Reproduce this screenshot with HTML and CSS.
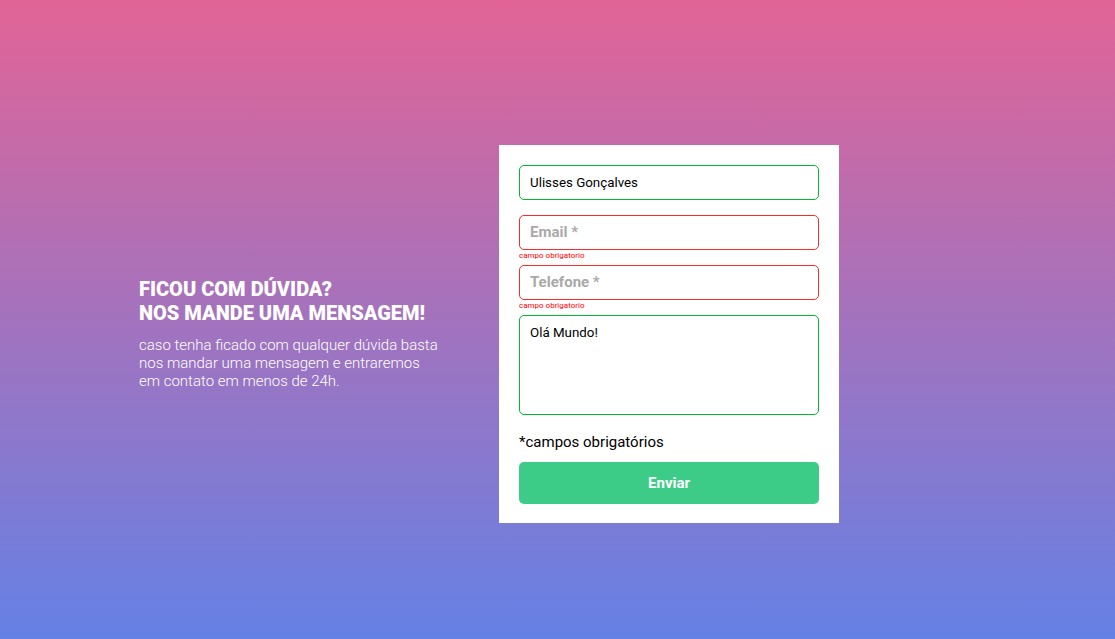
FILE: index.html
```html
<!DOCTYPE html>
<html lang="pt-BR">
<head>
<meta charset="utf-8">
<meta name="viewport" content="width=device-width, initial-scale=1">
<title>Contato</title>
<link rel="stylesheet" href="styles.css">
</head>
<body>
<main class="contact">
  <section class="intro">
    <h1 class="intro-title">Ficou com dúvida?<br>Nos mande uma mensagem!</h1>
    <p class="intro-text">caso tenha ficado com qualquer dúvida basta nos mandar uma mensagem e entraremos em contato em menos de 24h.</p>
  </section>
  <form class="form" novalidate>
    <div class="field">
      <input class="control valid" type="text" aria-label="Nome" value="Ulisses Gonçalves">
    </div>
    <div class="field">
      <input class="control invalid" type="email" aria-label="Email" placeholder="Email *" aria-describedby="email-error">
      <span class="error" id="email-error">campo obrigatorio</span>
    </div>
    <div class="field">
      <input class="control invalid" type="tel" aria-label="Telefone" placeholder="Telefone *" aria-describedby="tel-error">
      <span class="error" id="tel-error">campo obrigatorio</span>
    </div>
    <textarea class="control message valid" aria-label="Mensagem">Olá Mundo!</textarea>
    <p class="note">*campos obrigatórios</p>
    <button class="submit" type="submit">Enviar</button>
  </form>
</main>
</body>
</html>
```
FILE: styles.css
```css
* {
  margin: 0;
  padding: 0;
  box-sizing: border-box;
}

body {
  min-height: 100vh;
  font-family: Roboto, sans-serif;
  background: linear-gradient(#e26496, #6481e5);
}

.contact {
  display: flex;
  align-items: center;
  gap: 60px;
  min-height: 100vh;
  padding: 29px 139px 0;
}

.intro {
  flex: 0 1 300px;
  padding-bottom: 1px;
}

.intro-title {
  margin-bottom: 11px;
  font-size: 20px;
  line-height: 24px;
  font-weight: 900;
  text-transform: uppercase;
  white-space: nowrap;
  color: #fff;
}

.intro-text {
  font-size: 15px;
  line-height: 18px;
  font-weight: 300;
  color: #fff;
}

.form {
  display: flex;
  flex-direction: column;
  flex: 0 0 340px;
  padding: 20px 20px 19px;
  background: #fff;
}

.field {
  display: flex;
  flex-direction: column;
  height: 50px;
}

.control {
  width: 100%;
  height: 35px;
  padding: 0 10px;
  border: 1px solid;
  border-radius: 5px;
  outline: none;
  background: #fff;
  font-family: inherit;
  color: #000;
}

.control::placeholder {
  font-size: 15px;
  font-weight: 700;
  color: #a9a9a9;
}

.valid {
  border-color: #00b92d;
}

.invalid {
  border-color: #f52d2d;
}

.message {
  height: 100px;
  padding-top: 9px;
  resize: none;
}

.error {
  font-size: 8px;
  line-height: 12px;
  color: #f00;
}

.note {
  margin: 18px 0 11px;
  font-size: 15px;
  line-height: 18px;
}

.submit {
  height: 42px;
  border: 0;
  border-radius: 5px;
  background: #3dcc87;
  color: #fff;
  font-family: inherit;
  font-size: 15px;
  font-weight: 700;
}
```
